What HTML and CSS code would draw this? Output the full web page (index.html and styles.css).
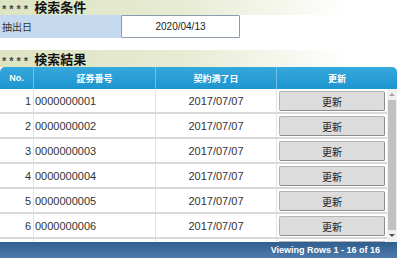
FILE: index.html
```html
<!DOCTYPE html>
<html lang="ja">
<head>
<meta charset="utf-8">
<title>検索</title>
<link rel="stylesheet" href="styles.css">
</head>
<body>
<div class="sec-title sec-first"><span class="stars">****</span><span class="sec-text">検索条件</span></div>
<div class="cond-row">
  <div class="cond-label">抽出日</div>
  <div class="cond-input">2020/04/13</div>
</div>
<div class="sec-title sec-second"><span class="stars">****</span><span class="sec-text">検索結果</span></div>
<div class="grid">
  <div class="grid-head">
    <div class="hcell">No.</div>
    <div class="hcell">証券番号</div>
    <div class="hcell">契約満了日</div>
    <div class="hcell">更新</div>
  </div>
  <div class="grid-body">
    <div class="rows">
      <div class="row"><div class="c-no">1</div><div class="c-id">0000000001</div><div class="c-date">2017/07/07</div><div class="c-btn"><span class="btn">更新</span></div></div>
      <div class="row"><div class="c-no">2</div><div class="c-id">0000000002</div><div class="c-date">2017/07/07</div><div class="c-btn"><span class="btn">更新</span></div></div>
      <div class="row"><div class="c-no">3</div><div class="c-id">0000000003</div><div class="c-date">2017/07/07</div><div class="c-btn"><span class="btn">更新</span></div></div>
      <div class="row"><div class="c-no">4</div><div class="c-id">0000000004</div><div class="c-date">2017/07/07</div><div class="c-btn"><span class="btn">更新</span></div></div>
      <div class="row"><div class="c-no">5</div><div class="c-id">0000000005</div><div class="c-date">2017/07/07</div><div class="c-btn"><span class="btn">更新</span></div></div>
      <div class="row"><div class="c-no">6</div><div class="c-id">0000000006</div><div class="c-date">2017/07/07</div><div class="c-btn"><span class="btn">更新</span></div></div>
      <div class="row row-partial"><div class="c-no"></div><div class="c-id"></div><div class="c-date"></div><div class="c-btn"><span class="btn btn-partial"></span></div></div>
    </div>
    <div class="vscroll">
      <div class="arrow arrow-up"></div>
      <div class="thumb"></div>
      <div class="arrow arrow-down"></div>
    </div>
  </div>
  <div class="grid-foot">Viewing Rows 1 - 16 of 16</div>
</div>
</body>
</html>
```

FILE: styles.css
```css
html, body {
  margin: 0;
  padding: 0;
  background: #ffffff;
}
body {
  font-family: "Liberation Sans", Arial, "Noto Sans CJK JP", sans-serif;
  font-size: 11px;
  color: #333333;
  width: 399px;
  height: 259px;
  overflow: hidden;
}
.sec-title {
  display: flex;
  align-items: center;
  background: linear-gradient(to right, #dde4c2 0%, #e6ebd2 45%, #ffffff 87%);
  padding-left: 2px;
}
.sec-first {
  padding-top: 1px;
}
.sec-second {
  margin-top: 12px;
  padding-top: 3px;
}
.stars {
  font-size: 11px;
  font-weight: bold;
  color: #444444;
  letter-spacing: 3px;
  margin-right: 3px;
  line-height: 11px;
  padding-top: 2px;
}
.sec-text {
  font-family: "Liberation Sans", "Noto Sans CJK JP", sans-serif;
  font-weight: bold;
  font-size: 13px;
  line-height: 14px;
  color: #111111;
}
.cond-row {
  display: flex;
  height: 23px;
}
.cond-label {
  width: 121px;
  background: #c5d9ef;
  display: flex;
  align-items: center;
  padding-left: 2px;
  box-sizing: border-box;
  font-family: "Noto Sans CJK JP", sans-serif;
  font-size: 10px;
  color: #333;
}
.cond-input {
  width: 119px;
  box-sizing: border-box;
  border: 1px solid #8d9bb0;
  border-radius: 1px;
  display: flex;
  align-items: center;
  justify-content: center;
  font-size: 10px;
  color: #222;
  background: #fff;
}
.grid {
  width: 397px;
}
.grid-head {
  display: grid;
  grid-template-columns: 33px 122px 121px 121px;
  height: 22px;
  background: linear-gradient(#35a8dc, #1e94cf);
  border-radius: 5px 5px 0 0;
}
.hcell {
  display: flex;
  align-items: center;
  justify-content: center;
  color: #ffffff;
  font-weight: bold;
  font-size: 9px;
  font-family: "Liberation Sans", "Noto Sans CJK JP", sans-serif;
  border-left: 1px solid #6cc2e8;
}
.hcell:first-child {
  border-left: none;
}
.grid-body {
  display: flex;
  height: 153px;
  overflow: hidden;
}
.rows {
  width: 387px;
  display: flex;
  flex-direction: column;
}
.row {
  display: grid;
  grid-template-columns: 33px 122px 121px 111px;
  height: 25px;
  flex: none;
  box-sizing: border-box;
  border-bottom: 2px solid #d9d9d9;
  font-size: 11px;
  color: #333;
}
.row-partial {
  height: 3px;
  border-bottom: none;
}
.row > div {
  display: flex;
  align-items: center;
  border-left: 1px solid #e3e3e3;
}
.row > div:first-child {
  border-left: none;
}
.c-no {
  justify-content: flex-end;
  padding-right: 2px;
}
.c-id {
  padding-left: 1px;
}
.c-date {
  justify-content: center;
}
.c-btn {
  align-items: flex-start !important;
  padding: 2px 0 0 2px;
}
.btn {
  display: flex;
  align-items: center;
  justify-content: center;
  width: 106px;
  height: 20px;
  box-sizing: border-box;
  background: #dcdcdc;
  border: 1px solid #b4b4b4;
  border-right-color: #8c8c8c;
  border-bottom-color: #8c8c8c;
  border-radius: 2px;
  font-family: "Noto Sans CJK JP", sans-serif;
  font-size: 10px;
  color: #222;
}
.btn-partial {
  height: 1px;
  border-bottom: none;
  border-radius: 2px 2px 0 0;
}
.vscroll {
  width: 10px;
  background: #f0f0f0;
  display: flex;
  flex-direction: column;
  align-items: center;
}
.arrow {
  width: 0;
  height: 0;
  border-left: 3px solid transparent;
  border-right: 3px solid transparent;
  flex: none;
}
.arrow-up {
  margin-top: 4px;
  border-bottom: 3px solid #a3a3a3;
}
.arrow-down {
  margin-top: 4px;
  border-top: 3px solid #505050;
}
.thumb {
  width: 8px;
  height: 130px;
  margin-top: 4px;
  background: #c1c1c1;
}
.grid-foot {
  height: 16px;
  background: linear-gradient(#2f5e90, #4e7bab);
  color: #ffffff;
  font-weight: bold;
  font-size: 9px;
  display: flex;
  align-items: center;
  justify-content: flex-end;
  padding-right: 17px;
}
```
